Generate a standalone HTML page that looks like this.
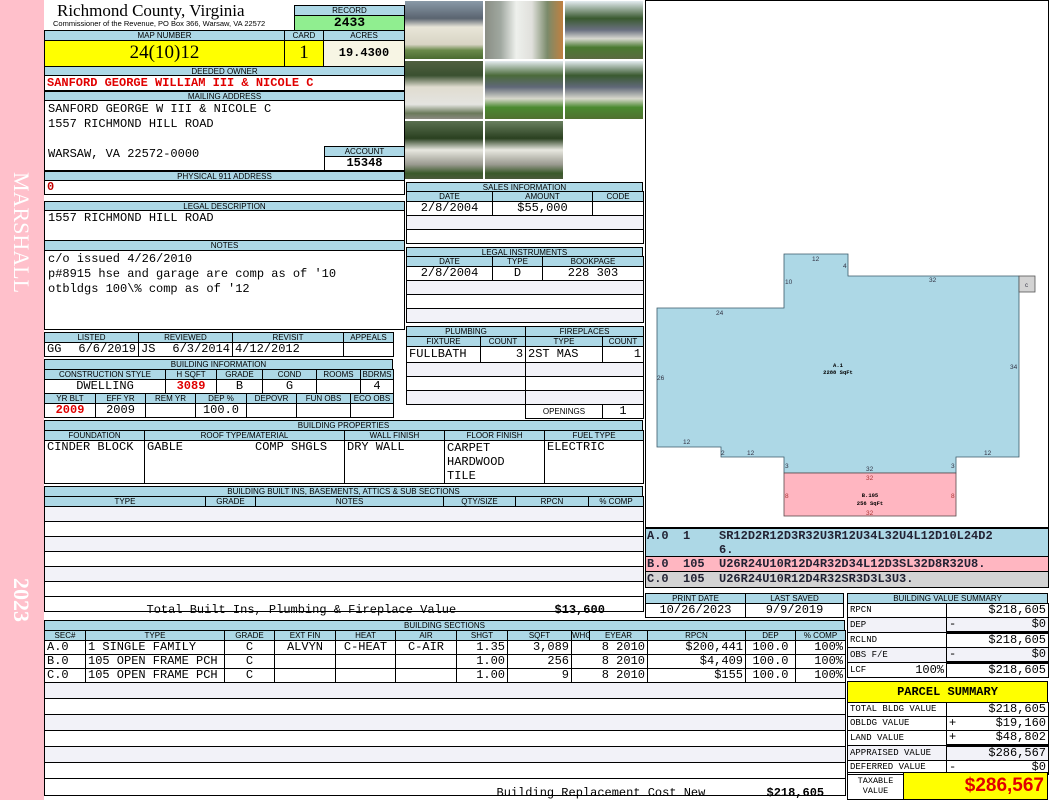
<!DOCTYPE html>
<html><head><meta charset="utf-8">
<style>
*{margin:0;padding:0;box-sizing:border-box}
body{width:1050px;height:800px;position:relative;background:#fff;overflow:hidden;font-family:"Liberation Sans",sans-serif;color:#000}
.a{position:absolute;overflow:hidden;white-space:pre}
.h{background:#add8e6;border:1px solid #000;font-size:8px;text-align:center;line-height:9px}
.b{border:1px solid #000;background:#fff}
.m{font-family:"Liberation Mono",monospace;font-size:12px}
table{position:absolute;border-collapse:collapse;table-layout:fixed}
td{border:1px solid #000;padding:0 2px;overflow:hidden;white-space:nowrap}
tr.hd td{background:#add8e6;font-size:8px;text-align:center;height:10px;line-height:8px;padding:0}
tr.v td{font-family:"Liberation Mono",monospace;font-size:12px;line-height:13px}
tr.alt td{background:#f2f2f8}
.r{text-align:right}.c{text-align:center}
.red{color:#e00000;font-weight:bold}
.photo{position:absolute;width:78px;height:58px}
</style></head><body>
<!-- sidebar -->
<div class="a" style="left:0;top:0;width:44px;height:800px;background:#ffc0cb"></div>
<div class="a" style="left:6px;top:172px;width:30px;height:140px;color:#fff;font-family:'Liberation Serif',serif;font-size:22px;writing-mode:vertical-rl;line-height:30px">MARSHALL</div>
<div class="a" style="left:6px;top:578px;width:30px;height:60px;color:#fff;font-family:'Liberation Serif',serif;font-size:22px;font-weight:bold;writing-mode:vertical-rl;line-height:30px">2023</div>

<!-- title -->
<div class="a" style="left:57px;top:1px;font-family:'Liberation Serif',serif;font-size:17px">Richmond County, Virginia</div>
<div class="a" style="left:53px;top:19px;font-size:7.5px">Commissioner of the Revenue, PO Box 366, Warsaw, VA 22572</div>
<div class="a h" style="left:294px;top:5px;width:111px;height:11px">RECORD</div>
<div class="a m" style="left:294px;top:15px;width:111px;height:16px;background:#90ee90;border:1px solid #000;text-align:center;font-weight:bold;font-size:13px;line-height:14px">2433</div>

<div class="a h" style="left:44px;top:30px;width:241px;height:11px">MAP NUMBER</div>
<div class="a h" style="left:284px;top:30px;width:40px;height:11px">CARD</div>
<div class="a h" style="left:323px;top:30px;width:82px;height:11px">ACRES</div>
<div class="a" style="left:44px;top:40px;width:241px;height:27px;background:#ffff00;border:1px solid #000;text-align:center;font-family:'Liberation Serif',serif;font-size:19px;line-height:24px">24(10)12</div>
<div class="a" style="left:284px;top:40px;width:40px;height:27px;background:#ffff00;border:1px solid #000;text-align:center;font-family:'Liberation Serif',serif;font-size:19px;line-height:24px">1</div>
<div class="a m" style="left:323px;top:40px;width:82px;height:27px;background:#f7f5e4;border:1px solid #000;text-align:center;font-weight:bold;line-height:24px">19.4300</div>

<div class="a h" style="left:44px;top:66px;width:361px;height:10px">DEEDED OWNER</div>
<div class="a b m red" style="left:44px;top:75px;width:361px;height:16px;line-height:14px;padding-left:2px">SANFORD GEORGE WILLIAM III &amp; NICOLE C</div>
<div class="a h" style="left:44px;top:91px;width:361px;height:10px">MAILING ADDRESS</div>
<div class="a b m" style="left:44px;top:100px;width:361px;height:71px;padding-left:3px;line-height:15px;padding-top:1px">SANFORD GEORGE W III &amp; NICOLE C
1557 RICHMOND HILL ROAD

WARSAW, VA 22572-0000</div>
<div class="a h" style="left:324px;top:146px;width:81px;height:11px">ACCOUNT</div>
<div class="a m" style="left:324px;top:156px;width:81px;height:15px;border:1px solid #000;text-align:center;font-weight:bold;line-height:13px">15348</div>
<div class="a h" style="left:44px;top:171px;width:361px;height:10px">PHYSICAL 911 ADDRESS</div>
<div class="a b m red" style="left:44px;top:180px;width:361px;height:15px;line-height:13px;padding-left:2px;color:#c00000">0</div>

<div class="a h" style="left:44px;top:201px;width:361px;height:10px">LEGAL DESCRIPTION</div>
<div class="a b m" style="left:44px;top:210px;width:361px;height:31px;padding-left:3px;line-height:15px">1557 RICHMOND HILL ROAD</div>
<div class="a h" style="left:44px;top:240px;width:361px;height:11px">NOTES</div>
<div class="a b m" style="left:44px;top:250px;width:361px;height:80px;padding-left:3px;line-height:15px;padding-top:1px">c/o issued 4/26/2010
p#8915 hse and garage are comp as of '10
otbldgs 100\% comp as of '12</div>

<!-- listed -->
<table style="left:44px;top:332px;width:349px">
<colgroup><col style="width:94px"><col style="width:94px"><col style="width:111px"><col style="width:50px"></colgroup>
<tr class="hd"><td>LISTED</td><td>REVIEWED</td><td>REVISIT</td><td>APPEALS</td></tr>
<tr class="v"><td>GG<span style="float:right">6/6/2019</span></td><td>JS<span style="float:right">6/3/2014</span></td><td>4/12/2012</td><td></td></tr>
</table>

<!-- building info -->
<div class="a h" style="left:44px;top:359px;width:349px;height:11px">BUILDING INFORMATION</div>
<table style="left:44px;top:369px;width:349px">
<colgroup><col style="width:121px"><col style="width:51px"><col style="width:46px"><col style="width:54px"><col style="width:44px"><col style="width:33px"></colgroup>
<tr class="hd"><td>CONSTRUCTION STYLE</td><td>H SQFT</td><td>GRADE</td><td>COND</td><td>ROOMS</td><td>BDRMS</td></tr>
<tr class="v"><td class="c">DWELLING</td><td class="c red">3089</td><td class="c">B</td><td class="c">G</td><td></td><td class="c">4</td></tr>
</table>
<table style="left:44px;top:393px;width:349px">
<colgroup><col style="width:51px"><col style="width:50px"><col style="width:50px"><col style="width:51px"><col style="width:50px"><col style="width:54px"><col style="width:43px"></colgroup>
<tr class="hd"><td>YR BLT</td><td>EFF YR</td><td>REM YR</td><td>DEP %</td><td>DEPOVR</td><td>FUN OBS</td><td>ECO OBS</td></tr>
<tr class="v"><td class="c red">2009</td><td class="c">2009</td><td></td><td class="c">100.0</td><td></td><td></td><td></td></tr>
</table>

<!-- photos -->
<div class="photo" style="left:405px;top:1px;background:linear-gradient(#8a9aa8 0,#5a6470 30%,#e8e6d8 45%,#d8d4c4 75%,#6a8a4a 85%,#4a6a30)"></div>
<div class="photo" style="left:485px;top:1px;background:linear-gradient(90deg,#8a8e84 0,#a0a8a0 20%,#eef0ec 40%,#e0e0dc 60%,#7a8a6a 80%,#c08040);"></div>
<div class="photo" style="left:565px;top:1px;background:linear-gradient(#e4ecf0 0,#3a5a30 30%,#6a7080 50%,#d8d8d0 65%,#4a7a30 80%,#5a6a40)"></div>
<div class="photo" style="left:405px;top:61px;background:linear-gradient(#506040 0,#3a5030 25%,#e0dcd0 45%,#e4e4e0 75%,#6a7a5a 90%,#8a8a80)"></div>
<div class="photo" style="left:485px;top:61px;background:linear-gradient(#e4ecf0 0,#4a6a3a 25%,#606878 45%,#d8d8cc 65%,#4a8a30 80%,#507030)"></div>
<div class="photo" style="left:565px;top:61px;background:linear-gradient(#e4ecf0 0,#3a5a30 25%,#606878 45%,#d8d8cc 65%,#4a8a30 80%,#507030)"></div>
<div class="photo" style="left:405px;top:121px;background:linear-gradient(#5a7050 0,#2a4020 30%,#e8e8e0 50%,#9a9a90 75%,#3a5a2a 90%,#4a5a3a)"></div>
<div class="photo" style="left:485px;top:121px;background:linear-gradient(#6a8060 0,#2a4020 30%,#e8e8e0 50%,#9a9a90 75%,#3a5a2a 90%,#4a5a3a)"></div>

<!-- sales -->
<div class="a h" style="left:406px;top:182px;width:237px;height:10px">SALES INFORMATION</div>
<table style="left:406px;top:191px;width:237px">
<colgroup><col style="width:86px"><col style="width:100px"><col style="width:51px"></colgroup>
<tr class="hd"><td>DATE</td><td>AMOUNT</td><td>CODE</td></tr>
<tr class="v"><td class="c">2/8/2004</td><td class="c">$55,000</td><td></td></tr>
<tr class="v alt"><td colspan="3" style="height:14px"></td></tr>
<tr class="v"><td colspan="3" style="height:14px"></td></tr>
</table>
<div class="a h" style="left:406px;top:247px;width:237px;height:10px">LEGAL INSTRUMENTS</div>
<table style="left:406px;top:256px;width:237px">
<colgroup><col style="width:86px"><col style="width:50px"><col style="width:101px"></colgroup>
<tr class="hd"><td>DATE</td><td>TYPE</td><td>BOOKPAGE</td></tr>
<tr class="v"><td class="c">2/8/2004</td><td class="c">D</td><td class="c">228 303</td></tr>
<tr class="v alt"><td colspan="3" style="height:14px"></td></tr>
<tr class="v"><td colspan="3" style="height:14px"></td></tr>
<tr class="v alt"><td colspan="3" style="height:14px"></td></tr>
</table>

<!-- plumbing / fireplaces -->
<table style="left:406px;top:326px;width:119px">
<colgroup><col style="width:74px"><col style="width:45px"></colgroup>
<tr class="hd"><td colspan="2">PLUMBING</td></tr>
<tr class="hd"><td>FIXTURE</td><td>COUNT</td></tr>
<tr class="v"><td style="height:16px">FULLBATH</td><td class="r">3</td></tr>
<tr class="v alt"><td colspan="2" style="height:14px"></td></tr>
<tr class="v"><td colspan="2" style="height:14px"></td></tr>
<tr class="v alt"><td colspan="2" style="height:14px"></td></tr>
</table>
<table style="left:525px;top:326px;width:118px">
<colgroup><col style="width:77px"><col style="width:41px"></colgroup>
<tr class="hd"><td colspan="2">FIREPLACES</td></tr>
<tr class="hd"><td>TYPE</td><td>COUNT</td></tr>
<tr class="v"><td style="height:16px">2ST MAS</td><td class="r">1</td></tr>
<tr class="v alt"><td colspan="2" style="height:14px"></td></tr>
<tr class="v"><td colspan="2" style="height:14px"></td></tr>
<tr class="v alt"><td colspan="2" style="height:14px"></td></tr>
<tr class="v"><td class="c" style="font-family:'Liberation Sans';font-size:8px">OPENINGS</td><td class="c">1</td></tr>
</table>

<!-- building properties -->
<div class="a h" style="left:44px;top:420px;width:599px;height:11px">BUILDING PROPERTIES</div>
<table style="left:44px;top:430px;width:599px">
<colgroup><col style="width:100px"><col style="width:200px"><col style="width:100px"><col style="width:100px"><col style="width:99px"></colgroup>
<tr class="hd"><td>FOUNDATION</td><td>ROOF TYPE/MATERIAL</td><td>WALL FINISH</td><td>FLOOR FINISH</td><td>FUEL TYPE</td></tr>
<tr class="v" style="vertical-align:top"><td style="height:43px">CINDER BLOCK</td><td style="white-space:pre">GABLE          COMP SHGLS</td><td>DRY WALL</td><td style="white-space:pre;line-height:14px">CARPET
HARDWOOD
TILE</td><td>ELECTRIC</td></tr>
</table>

<!-- built ins -->
<div class="a h" style="left:44px;top:486px;width:599px;height:11px">BUILDING BUILT INS, BASEMENTS, ATTICS &amp; SUB SECTIONS</div>
<table style="left:44px;top:496px;width:599px">
<colgroup><col style="width:161px"><col style="width:50px"><col style="width:188px"><col style="width:72px"><col style="width:73px"><col style="width:55px"></colgroup>
<tr class="hd"><td>TYPE</td><td>GRADE</td><td>NOTES</td><td>QTY/SIZE</td><td>RPCN</td><td>% COMP</td></tr>
<tr class="v alt"><td colspan="6" style="height:15px"></td></tr>
<tr class="v"><td colspan="6" style="height:15px"></td></tr>
<tr class="v alt"><td colspan="6" style="height:15px"></td></tr>
<tr class="v"><td colspan="6" style="height:15px"></td></tr>
<tr class="v alt"><td colspan="6" style="height:15px"></td></tr>
<tr class="v"><td colspan="6" style="height:15px"></td></tr>
<tr class="v"><td colspan="6" style="height:15px"><span style="position:absolute;left:102px">Total Built Ins, Plumbing &amp; Fireplace Value</span><span style="position:absolute;left:510px;font-weight:bold">$13,600</span></td></tr>
</table>

<!-- building sections -->
<div class="a h" style="left:44px;top:620px;width:801px;height:11px">BUILDING SECTIONS</div>
<table style="left:44px;top:630px;width:801px">
<colgroup><col style="width:41px"><col style="width:139px"><col style="width:50px"><col style="width:61px"><col style="width:60px"><col style="width:61px"><col style="width:51px"><col style="width:64px"><col style="width:18px"><col style="width:58px"><col style="width:98px"><col style="width:50px"><col style="width:50px"></colgroup>
<tr class="hd"><td>SEC#</td><td>TYPE</td><td>GRADE</td><td>EXT FIN</td><td>HEAT</td><td>AIR</td><td>SHGT</td><td>SQFT</td><td>WHGT</td><td>EYEAR</td><td>RPCN</td><td>DEP</td><td>% COMP</td></tr>
<tr class="v"><td>A.0</td><td> 1 SINGLE FAMILY</td><td class="c">C</td><td class="c">ALVYN</td><td class="c">C-HEAT</td><td class="c">C-AIR</td><td class="r">1.35</td><td class="r">3,089</td><td class="r" colspan="2">8 2010</td><td class="r">$200,441</td><td class="c">100.0</td><td class="r">100%</td></tr>
<tr class="v"><td>B.0</td><td>105 OPEN FRAME PCH</td><td class="c">C</td><td></td><td></td><td></td><td class="r">1.00</td><td class="r">256</td><td class="r" colspan="2">8 2010</td><td class="r">$4,409</td><td class="c">100.0</td><td class="r">100%</td></tr>
<tr class="v"><td>C.0</td><td>105 OPEN FRAME PCH</td><td class="c">C</td><td></td><td></td><td></td><td class="r">1.00</td><td class="r">9</td><td class="r" colspan="2">8 2010</td><td class="r">$155</td><td class="c">100.0</td><td class="r">100%</td></tr>
<tr class="v alt"><td colspan="13" style="height:16px"></td></tr>
<tr class="v"><td colspan="13" style="height:16px"></td></tr>
<tr class="v alt"><td colspan="13" style="height:16px"></td></tr>
<tr class="v"><td colspan="13" style="height:16px"></td></tr>
<tr class="v alt"><td colspan="13" style="height:16px"></td></tr>
<tr class="v"><td colspan="13" style="height:16px"></td></tr>
<tr class="v"><td colspan="13" style="height:17px"><span style="position:absolute;left:452px">Building Replacement Cost New</span><span style="position:absolute;left:722px;font-weight:bold">$218,605</span></td></tr>
</table>

<!-- sketch -->
<div class="a" style="left:645px;top:0;width:404px;height:528px;border:1px solid #000"></div>
<svg class="a" style="left:645px;top:0" width="404" height="528" viewBox="645 0 404 528">
<polygon points="657,308 784,308 784,254 848,254 848,276 1019,276 1019,457 956,457 956,473 784,473 784,457 721,457 721,447 657,447" fill="#add8e6" stroke="#3a5a6a" stroke-width="0.8"/>
<rect x="784" y="473" width="172" height="43" fill="#ffb6c1" stroke="#5a4a4a" stroke-width="0.8"/>
<rect x="1019" y="276" width="16" height="16" fill="#d3d3d3" stroke="#555" stroke-width="0.8"/>
<g font-family="Liberation Sans" font-size="6.5" fill="#334">
<text x="812" y="261">12</text><text x="843" y="268">4</text><text x="785" y="284">10</text><text x="929" y="282">32</text>
<text x="716" y="315">24</text><text x="657" y="380">26</text><text x="1010" y="369">34</text>
<text x="683" y="444">12</text><text x="721" y="455">2</text><text x="747" y="455">12</text><text x="984" y="455">12</text>
<text x="785" y="468">3</text><text x="951" y="468">3</text><text x="866" y="471">32</text>
<text x="1025" y="287" font-size="6">c</text>
</g>
<g font-family="Liberation Sans" font-size="6.5" fill="#a33">
<text x="866" y="480">32</text><text x="785" y="498">8</text><text x="951" y="498">8</text><text x="866" y="515">32</text>
</g>
<g font-family="Liberation Mono" font-size="5.5" font-weight="bold" text-anchor="middle">
<text x="838" y="367">A.1</text><text x="838" y="374">2288 SqFt</text>
<text x="870" y="497">B.105</text><text x="870" y="505">256 SqFt</text>
</g>
</svg>

<!-- code lines -->
<div class="a m" style="left:645px;top:528px;width:404px;height:29px;background:#add8e6;border:1px solid #000;font-weight:bold;line-height:14px;color:#223;padding-left:1px">A.0  1    SR12D2R12D3R32U3R12U34L32U4L12D10L24D2
          6.</div>
<div class="a m" style="left:645px;top:557px;width:404px;height:15px;background:#ffb6c1;border:1px solid #000;border-top:0;font-weight:bold;line-height:14px;color:#223;padding-left:1px">B.0  105  U26R24U10R12D4R32D34L12D3SL32D8R32U8.</div>
<div class="a m" style="left:645px;top:572px;width:404px;height:16px;background:#d3d3d3;border:1px solid #000;border-top:0;font-weight:bold;line-height:14px;color:#223;padding-left:1px">C.0  105  U26R24U10R12D4R32SR3D3L3U3.</div>

<table style="left:645px;top:593px;width:198px">
<colgroup><col style="width:100px"><col style="width:98px"></colgroup>
<tr class="hd"><td>PRINT DATE</td><td>LAST SAVED</td></tr>
<tr class="v"><td class="c">10/26/2023</td><td class="c">9/9/2019</td></tr>
</table>

<div class="a h" style="left:847px;top:593px;width:201px;height:11px">BUILDING VALUE SUMMARY</div>
<table style="left:847px;top:603px;width:201px">
<colgroup><col style="width:99px"><col style="width:102px"></colgroup>
<tr class="v"><td style="font-size:9px">RPCN</td><td class="r">$218,605</td></tr>
<tr class="v alt"><td style="font-size:9px">DEP</td><td style="border-bottom:3px solid #000">-<span style="float:right">$0</span></td></tr>
<tr class="v"><td style="font-size:9px">RCLND</td><td class="r">$218,605</td></tr>
<tr class="v alt"><td style="font-size:9px">OBS F/E</td><td style="border-bottom:3px solid #000">-<span style="float:right">$0</span></td></tr>
<tr class="v"><td style="font-size:9px">LCF<span style="float:right;font-size:12px">100%</span></td><td class="r">$218,605</td></tr>
</table>

<div class="a" style="left:847px;top:681px;width:201px;height:22px;background:#ffff00;border:1px solid #000;text-align:center;font-family:'Liberation Mono',monospace;font-weight:bold;font-size:12px;line-height:20px">PARCEL SUMMARY</div>
<table style="left:847px;top:702px;width:201px">
<colgroup><col style="width:99px"><col style="width:102px"></colgroup>
<tr class="v"><td style="font-size:9px">TOTAL BLDG VALUE</td><td class="r">$218,605</td></tr>
<tr class="v"><td style="font-size:9px">OBLDG VALUE</td><td>+<span style="float:right">$19,160</span></td></tr>
<tr class="v"><td style="font-size:9px">LAND VALUE</td><td style="border-bottom:3px solid #000">+<span style="float:right">$48,802</span></td></tr>
<tr class="v alt"><td style="font-size:9px">APPRAISED VALUE</td><td class="r">$286,567</td></tr>
<tr class="v"><td style="font-size:9px">DEFERRED VALUE</td><td>-<span style="float:right">$0</span></td></tr>
</table>
<div class="a" style="left:847px;top:772px;width:57px;height:28px;border:1px solid #000;font-family:'Liberation Mono',monospace;font-size:8.5px;text-align:center;line-height:10px;padding-top:3px">TAXABLE
VALUE</div>
<div class="a" style="left:903px;top:772px;width:145px;height:28px;background:#ffff00;border:1px solid #000;text-align:right;color:#e00000;font-weight:bold;font-size:19px;line-height:26px;padding-right:3px">$286,567</div>
</body></html>
